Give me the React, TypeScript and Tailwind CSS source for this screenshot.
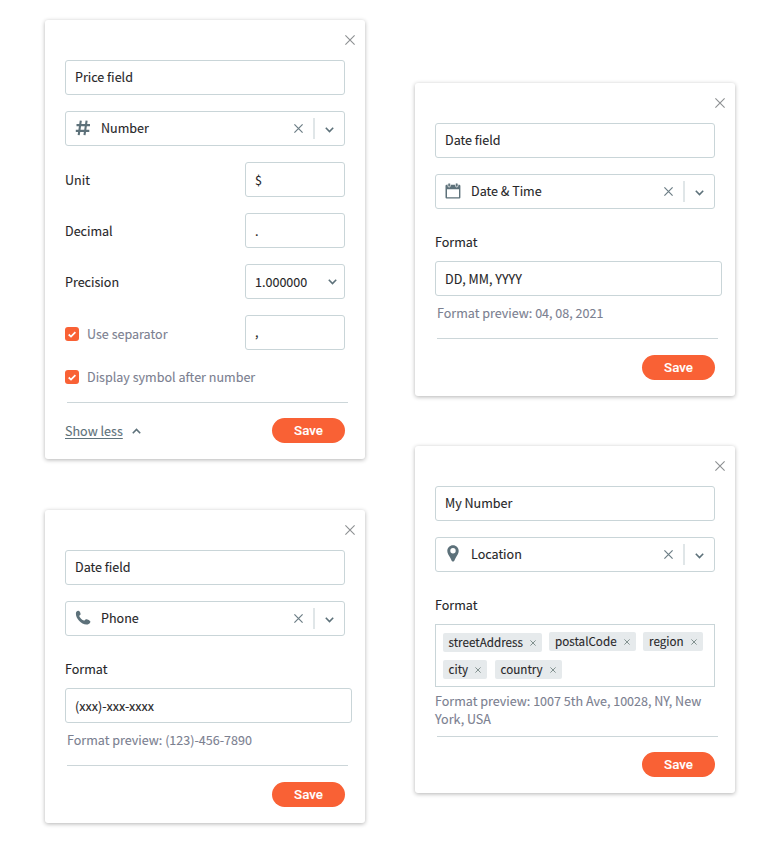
import type { ReactNode } from "react";

const bodyFont = "font-['Noto_Sans_CJK_SC',sans-serif]";

function Cross({ size, className, stroke = 1 }: { size: number; className: string; stroke?: number }) {
  return (
    <svg width={size} height={size} viewBox={`0 0 ${size} ${size}`} className={`shrink-0 ${className}`} fill="none" stroke="currentColor" strokeWidth={stroke}>
      <path d={`M0.4 0.4L${size - 0.4} ${size - 0.4}M${size - 0.4} 0.4L0.4 ${size - 0.4}`} />
    </svg>
  );
}

function Chevron({ className = "" }: { className?: string }) {
  return (
    <svg width="9" height="6" viewBox="0 0 9 6" className={`shrink-0 text-[#5d717a] ${className}`} fill="none" stroke="currentColor" strokeWidth="1.6">
      <path d="M0.8 0.8L4.5 4.5L8.2 0.8" />
    </svg>
  );
}

const icons = {
  number: (
    <svg width="16" height="16" viewBox="0 0 16 16" fill="none" stroke="currentColor" strokeWidth="2.1">
      <path d="M5.8 0.7L3.7 15.2M11.6 0.7L9.5 15.2M1.5 5.1H15M0.8 10.9H14.3" />
    </svg>
  ),
  date: (
    <svg width="16" height="16" viewBox="0 0 16 16" fill="currentColor">
      <path fillRule="evenodd" d="M0.5 3Q0.5 1.8 1.5 1.8H14.3Q15.4 1.8 15.4 3V14.5Q15.4 15.6 14.3 15.6H1.6Q0.5 15.6 0.5 14.5ZM2 6.2V14.2H14V6.2Z" />
      <g stroke="#fff" strokeWidth="0.7">
        <rect x="2.9" y="0" width="2.5" height="4" rx="1.2" />
        <rect x="10.5" y="0" width="2.5" height="4" rx="1.2" />
      </g>
    </svg>
  ),
  phone: (
    <svg width="16" height="16" viewBox="0 0 16 16" fill="currentColor">
      <path d="M0.9 3.2C1 1.7 2 .8 3.2.7C4.5.7 5.4 2.5 5.6 3.9C5.7 4.9 4.5 5.2 4.2 5.9C4.6 7.5 7.2 9.9 9 10.6C9.8 10.5 10.2 9.2 11.1 9.2C12.6 9.3 15.4 10.6 15.4 11.7C15.3 13.4 13.2 14.6 11.4 14.6C6.2 14.5.6 8.3 .9 3.2Z" />
    </svg>
  ),
  location: (
    <svg width="16" height="17" viewBox="0 0 16 17" fill="currentColor">
      <path fillRule="evenodd" d="M8 .3C4.8.3 2.3 2.8 2.3 5.9C2.3 8.6 4 10.3 5.1 12.4C5.9 13.8 6.4 15.2 6.9 16Q8 17.1 9.1 16C9.6 15.2 10.1 13.8 10.9 12.4C12 10.3 13.7 8.6 13.7 5.9C13.7 2.8 11.2.3 8 .3ZM8 3A2.7 2.7 0 1 1 8 8.4A2.7 2.7 0 0 1 8 3Z" />
    </svg>
  ),
};

function Card({ height, children }: { height: string; children: ReactNode }) {
  return (
    <section className={`flex w-80 flex-col rounded-[3px] bg-white px-5 shadow-[0_1px_4px_rgba(0,0,0,0.3)] ${height}`}>
      <button className="mt-[15px] -mr-2.5 mb-[15px] self-end text-[#8c8f91]">
        <Cross size={10} className="" stroke={1.1} />
      </button>
      {children}
    </section>
  );
}

function Field({ value, className = "w-full pb-px" }: { value: string; className?: string }) {
  return (
    <div className={`flex h-[35px] shrink-0 items-center rounded-[3px] border border-[#c9d5d8] px-[9px] ${className}`}>{value}</div>
  );
}

function TypeSelect({ icon, label }: { icon: ReactNode; label: string }) {
  return (
    <div className="mt-4 flex h-[35px] shrink-0 items-center rounded-[3px] border border-[#c9d5d8] pr-[10px] pl-[9px]">
      <span className="mb-0.5 flex w-[26px] text-[#5d717a]">{icon}</span>
      <span className="pb-px">{label}</span>
      <Cross size={9} className="mr-[10px] ml-auto text-[#6c7d85]" stroke={1.2} />
      <span className="mr-[10px] h-[21px] w-0.5 bg-[#e0e6e8]" />
      <Chevron className="mt-0.5" />
    </div>
  );
}

function Row({ label, children }: { label: string; children: ReactNode }) {
  return (
    <div className="mt-4 flex h-[35px] items-center justify-between">
      <span>{label}</span>
      {children}
    </div>
  );
}

function CheckLabel({ label }: { label: string }) {
  return (
    <span className="flex items-center text-[#7b8090]">
      <span className="mr-2 flex h-3.5 w-3.5 items-center justify-center rounded-[3px] bg-[#f96135]">
        <svg width="8" height="7" viewBox="0 0 8 7" fill="none" stroke="#fff" strokeWidth="1.7">
          <path d="M0.7 3.5L3 5.6L7.4 1.1" />
        </svg>
      </span>
      {label}
    </span>
  );
}

const Divider = () => <div className="mr-[-3px] ml-0.5 h-px shrink-0 bg-[#ccd6d9]" />;

function Save({ className = "" }: { className?: string }) {
  return (
    <button className={`h-[25px] w-[73px] shrink-0 self-end rounded-full bg-[#f96135] font-[Roboto,sans-serif] text-[13.3px] font-medium text-white ${className}`}>
      Save
    </button>
  );
}

function Tag({ label, className }: { label: string; className: string }) {
  return (
    <span className={`flex h-[19px] items-center justify-between rounded-[2px] bg-[#e6eaec] pr-[6px] pl-1.5 text-[11.65px] ${className}`}>
      <span className="pb-px">{label}</span>
      <Cross size={6} className="text-[#82918f]" />
    </span>
  );
}

function FormatCard({ name, icon, type, format, preview }: { name: string; icon: ReactNode; type: string; format: string; preview: string }) {
  return (
    <Card height="h-[313px]">
      <Field value={name} />
      <TypeSelect icon={icon} label={type} />
      <div className="mt-[23px] h-5">Format</div>
      <Field value={format} className="mt-[9px] w-[287px] pt-px" />
      <div className="mt-[7px] ml-0.5 h-5 text-[#7b8090]">{preview}</div>
      <div className="h-[15px]" />
      <Divider />
      <Save className="mt-4" />
    </Card>
  );
}

export default function App() {
  return (
    <main className={`flex h-[854px] w-[781px] gap-[50px] bg-white pl-[45px] text-[12.56px] leading-5 text-[#262628] [-webkit-text-stroke:0.1px] ${bodyFont}`}>
      <div className="flex flex-col gap-[51px] pt-5">
        <Card height="h-[439px]">
          <Field value="Price field" />
          <TypeSelect icon={icons.number} label="Number" />
          <Row label="Unit">
            <Field value="$" className="w-[100px]" />
          </Row>
          <Row label="Decimal">
            <Field value="." className="w-[100px]" />
          </Row>
          <Row label="Precision">
            <div className="flex h-[35px] w-[100px] items-center justify-between rounded-[3px] border border-[#c9d5d8] pr-[7px] pl-[9px]">
              <span>1.000000</span>
              <Chevron />
            </div>
          </Row>
          <div className="mt-4 flex h-[35px] items-center justify-between">
            <div className="pt-[3px]">
              <CheckLabel label="Use separator" />
            </div>
            <Field value="," className="w-[100px] pb-px" />
          </div>
          <div className="mt-[17px] mb-[15px]">
            <CheckLabel label="Display symbol after number" />
          </div>
          <Divider />
          <div className="mt-[15px] flex items-start justify-between">
            <button className="flex h-[26px] items-center text-[#5d717a]">
              <span className="pb-px underline underline-offset-2">Show less</span>
              <Chevron className="ml-[9px] rotate-180" />
            </button>
            <Save className="mb-0.5" />
          </div>
        </Card>
        <FormatCard name="Date field" icon={icons.phone} type="Phone" format="(xxx)-xxx-xxxx" preview="Format preview: (123)-456-7890" />
      </div>
      <div className="flex flex-col gap-[50px] pt-[83px]">
        <FormatCard name="Date field" icon={icons.date} type="Date & Time" format="DD, MM, YYYY" preview="Format preview: 04, 08, 2021" />
        <Card height="h-[347px]">
          <Field value="My Number" />
          <TypeSelect icon={icons.location} label="Location" />
          <div className="mt-[23px] h-5">Format</div>
          <div className="mt-[9px] flex h-[63px] shrink-0 flex-col gap-2 border border-[#c9d5d8] pr-1.5 pl-[6.5px] pt-[7px]">
            <div className="flex gap-[7.5px]">
              <Tag label="streetAddress" className="mt-px w-[99px]" />
              <Tag label="postalCode" className="w-[86.5px]" />
              <Tag label="region" className="w-[59.5px]" />
            </div>
            <div className="flex gap-[7.5px]">
              <Tag label="city" className="w-[44.5px]" />
              <Tag label="country" className="w-[67px]" />
            </div>
          </div>
          <div className="mt-[5px] mb-2 h-9 leading-[18px] text-[#7b8090]">Format preview: 1007 5th Ave, 10028, NY, New York, USA</div>
          <Divider />
          <Save className="mt-[15px]" />
        </Card>
      </div>
    </main>
  );
}
